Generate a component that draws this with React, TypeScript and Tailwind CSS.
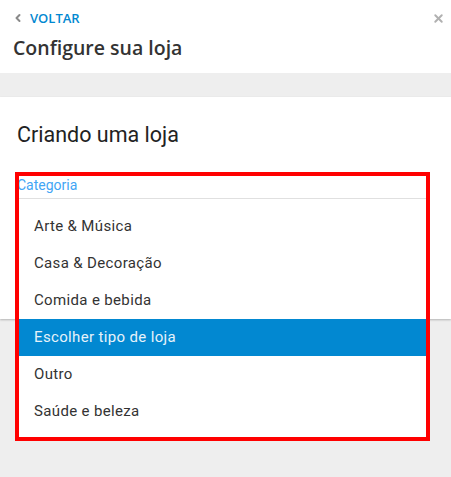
import { ChevronLeft, X } from 'lucide-react'

const OPTIONS = [
  'Arte & Música',
  'Casa & Decoração',
  'Comida e bebida',
  'Escolher tipo de loja',
  'Outro',
  'Saúde e beleza',
]

const SELECTED = 'Escolher tipo de loja'

export default function App() {
  return (
    <div
      className="w-[451px] h-[477px] bg-[#eeeeee] overflow-hidden"
      style={{ fontFamily: 'Roboto, "Noto Sans", sans-serif' }}
    >
      {/* Header */}
      <div className="h-[73px] bg-white px-[13px] pt-[10px]" style={{ fontFamily: '"Open Sans", sans-serif' }}>
        <div className="flex items-center h-[16px]">
          <ChevronLeft size={12} strokeWidth={4} className="text-[#8a8a8a] ml-[-1px]" />
          <span className="ml-[6px] text-[13px] font-semibold text-[#0288d1] leading-none">VOLTAR</span>
          <X size={13} strokeWidth={3.5} className="ml-auto mr-[-7px] text-[#b0b0b0]" />
        </div>
        <h1 className="mt-[8px] text-[19.5px] font-semibold text-[#333] leading-[28px]">Configure sua loja</h1>
      </div>

      {/* Card */}
      <div className="mt-[24px] h-[222px] bg-white shadow-[0_1px_2px_rgba(0,0,0,0.25)] relative">
        <h2 className="pt-[25px] pl-[17px] text-[21.5px] text-[#222] leading-[26px]">Criando uma loja</h2>

        {/* Dropdown */}
        <div className="absolute left-[15px] top-[75px] w-[415px] h-[269px] bg-white z-10">
          <div className="px-[4px] pt-[4px] h-full flex flex-col">
            <div className="h-[23px] border-b border-[#e0e0e0] text-[14px] text-[#42a5f5] leading-[18px]">
              <span className="ml-[-2px]">Categoria</span>
            </div>
            <ul className="pt-[9px]">
              {OPTIONS.map((o) => (
                <li
                  key={o}
                  className={`h-[37px] flex items-center pl-[15px] text-[15px] tracking-[0.35px] ${
                    o === SELECTED ? 'bg-[#0288d1] text-[#e6f2fa]' : 'text-[#333]'
                  }`}
                >
                  {o}
                </li>
              ))}
            </ul>
          </div>
          <div className="absolute inset-0 border-4 border-[#ff0000] pointer-events-none" />
        </div>
      </div>
    </div>
  )
}
